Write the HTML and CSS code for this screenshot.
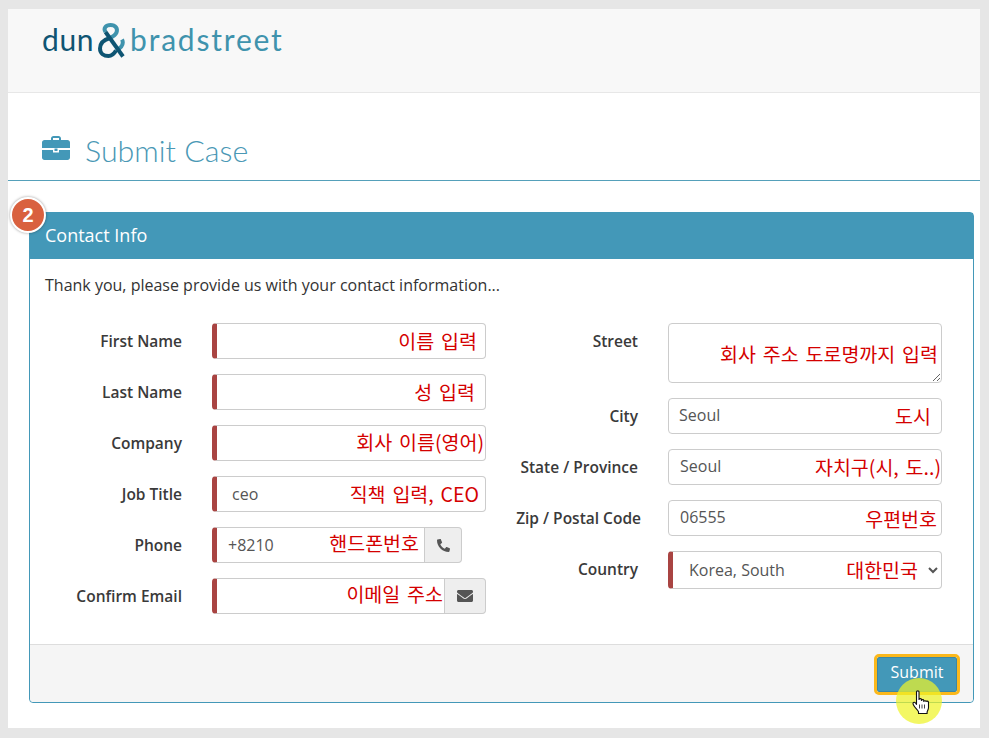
FILE: index.html
```html
<!DOCTYPE html>
<html lang="en">
<head>
    <meta charset="UTF-8">
    <meta name="viewport" content="width=device-width, initial-scale=1.0">
    <title>Submit Case</title>
    <link rel="stylesheet" href="styles.css">
</head>
<body>

    <div class="page">
        <!-- Logo -->
        <header class="top">
            <div class="logo">
                <span class="logo-dun">dun</span>
                <svg class="logo-amp" viewBox="0 0 27 35" width="27" height="35" fill="none" stroke-width="4">
                    <path d="M7.500 9 C5 5 8 2 12.500 2 C17.500 2 20 5.500 18.500 9.500 C17.500 12 15 13.500 12 15" stroke="#3f93ad"/>
                    <path d="M18 27.500 C21 26 24.800 23 24.800 19.500 C24.800 18.500 24.500 17.500 24 16.500" stroke="#3f93ad"/>
                    <path d="M7.500 9 L25 33.500" stroke="#0f5573"/>
                    <path d="M12 15 C5 17 2 21 2 25.500 C2 30.500 6 33 10.500 33 C14 33 16 31 18 27.500" stroke="#0f5573"/>
                </svg>
                <span class="logo-brad">bradstreet</span>
            </div>
        </header>

        <!-- Titulo -->
        <div class="title">
            <svg class="title-icon" viewBox="0 0 28 24" width="28" height="24">
                <path d="M9 4V2.500C9 1.100 10.100 0 11.500 0h5C17.900 0 19 1.100 19 2.500V4h6.500C26.900 4 28 5.100 28 6.500V12H0V6.500C0 5.100 1.100 4 2.500 4zM11 2v2h6V2z" fill="#4398b8"/>
                <path d="M0 14h11v2.500h6V14h11v7.500C28 22.900 26.900 24 25.500 24h-23C1.100 24 0 22.900 0 21.500z" fill="#4398b8"/>
                <rect x="12.500" y="12.500" width="3" height="2.500" fill="#4398b8"/>
            </svg>
            <h1>Submit Case</h1>
        </div>

        <!-- Painel de contato -->
        <section class="panel">
            <span class="step">2</span>
            <h2 class="panel-head">Contact Info</h2>
            <div class="panel-body">
                <p class="intro">Thank you, please provide us with your contact information...</p>

                <div class="form">
                    <div class="col col-left">
                        <div class="row">
                            <label>First Name</label>
                            <div class="field">
                                <input class="req" type="text">
                                <span class="note note-first">이름 입력</span>
                            </div>
                        </div>
                        <div class="row">
                            <label>Last Name</label>
                            <div class="field">
                                <input class="req" type="text">
                                <span class="note note-last">성 입력</span>
                            </div>
                        </div>
                        <div class="row">
                            <label>Company</label>
                            <div class="field">
                                <input class="req" type="text">
                                <span class="note note-company">회사 이름(영어)</span>
                            </div>
                        </div>
                        <div class="row">
                            <label>Job Title</label>
                            <div class="field">
                                <input class="req job" type="text" value="ceo">
                                <span class="note note-job">직책 입력, CEO</span>
                            </div>
                        </div>
                        <div class="row">
                            <label>Phone</label>
                            <div class="field group group-phone">
                                <input class="req phone" type="text" value="+8210">
                                <span class="addon">
                                    <svg viewBox="0 0 512 512" width="13" height="13"><path transform="matrix(-1 0 0 1 512 0)" d="M493.400 24.600l-104-24c-11.300-2.600-22.900 3.300-27.500 13.900l-48 112c-4.200 9.800-1.400 21.300 6.900 28l60.600 49.600c-36 76.700-98.900 140.500-177.200 177.200l-49.600-60.600c-6.800-8.300-18.200-11.100-28-6.900l-112 48C3.900 366.500-2 378.100.6 389.400l24 104C27.100 504.200 36.700 512 48 512c256.100 0 464-207.500 464-464 0-11.200-7.700-20.900-18.600-23.400z" fill="#555"/></svg>
                                </span>
                                <span class="note note-phone">핸드폰번호</span>
                            </div>
                        </div>
                        <div class="row">
                            <label>Confirm Email</label>
                            <div class="field group">
                                <input class="req" type="text">
                                <span class="addon addon-mail">
                                    <svg viewBox="0 0 512 512" width="16" height="16"><path d="M502.300 190.800c3.900-3.100 9.700-.2 9.700 4.700V400c0 26.500-21.500 48-48 48H48c-26.500 0-48-21.500-48-48V195.600c0-5 5.700-7.800 9.700-4.700 22.400 17.400 52.100 39.500 154.100 113.600 21.100 15.400 56.700 47.800 92.200 47.600 35.700.3 72-32.800 92.300-47.600 102-74.100 131.600-96.300 154-113.700zM256 320c23.200.4 56.600-29.200 73.400-41.400 132.700-96.300 142.800-104.700 173.400-128.700 5.800-4.500 9.200-11.500 9.200-18.900v-19c0-26.500-21.500-48-48-48H48C21.500 64 0 85.500 0 112v19c0 7.400 3.400 14.300 9.200 18.900 30.600 23.900 40.700 32.400 173.400 128.700 16.800 12.200 50.200 41.800 73.400 41.400z" fill="#555"/></svg>
                                </span>
                                <span class="note note-email">이메일 주소</span>
                            </div>
                        </div>
                    </div>

                    <div class="col col-right">
                        <div class="row">
                            <label>Street</label>
                            <div class="field">
                                <textarea></textarea>
                                <span class="note note-street">회사 주소 도로명까지 입력</span>
                            </div>
                        </div>
                        <div class="row">
                            <label>City</label>
                            <div class="field">
                                <input class="plain" type="text" value="Seoul">
                                <span class="note note-city">도시</span>
                            </div>
                        </div>
                        <div class="row">
                            <label>State / Province</label>
                            <div class="field">
                                <input class="plain shifted" type="text" value="Seoul">
                                <span class="note note-state">자치구(시, 도..)</span>
                            </div>
                        </div>
                        <div class="row">
                            <label class="label-wide">Zip / Postal Code</label>
                            <div class="field">
                                <input class="plain shifted" type="text" value="06555">
                                <span class="note note-zip">우편번호</span>
                            </div>
                        </div>
                        <div class="row row-select">
                            <label>Country</label>
                            <div class="field">
                                <select>
                                    <option>Korea, South</option>
                                </select>
                                <span class="note note-country">대한민국</span>
                            </div>
                        </div>
                    </div>
                </div>
            </div>

            <div class="panel-foot">
                <button type="button">Submit</button>
                <span class="click-mark"></span>
                <svg class="hand" viewBox="0 0 18 25" width="18" height="25">
                    <path d="M4.500 1.800C4.500.5 7 .5 7 1.800V9.500c0-1.200 2.400-1.200 2.400 0v1c0-1.200 2.400-1.200 2.400 0v1c0-1.100 2.300-1.100 2.300 0 0-.6 2.400-.6 2.400.8v5.200c0 1.800-1 3-1.400 4.500v1.500H6.500v-1.800C5.500 19.500 1 16 1 13.500c0-1.500 1.800-1.500 2.500-.5l1 1.300z" fill="#fff" stroke="#111" stroke-width="1.100" stroke-linejoin="round"/>
                    <path d="M7.500 14.500v4M10 14.500v4M12.500 14.500v4" stroke="#111" stroke-width=".8" fill="none"/>
                </svg>
            </div>
        </section>
    </div>

</body>
</html>
```

FILE: styles.css
```css
/* Moldura e pagina */
html, body {
    height: 100%;
}

body {
    font-family: 'Open Sans', 'Noto Sans', sans-serif;
    background-color: #e6e6e6;
    margin: 0;
    padding: 9px 9px 10px 8px;
    box-sizing: border-box;
    color: #333;
    overflow: hidden;
}

.page {
    background-color: #fff;
    height: 100%;
}

/* Cabecalho com logo */
.top {
    height: 84px;
    box-sizing: border-box;
    background-color: #f8f8f8;
    border-bottom: 1px solid #e7e7e7;
    padding: 14px 0 0 34px;
}

.logo {
    display: flex;
    align-items: flex-start;
    font-family: 'Lato', sans-serif;
    font-weight: 400;
    font-size: 30px;
    line-height: 32px;
}

.logo-dun {
    color: #0f5573;
    letter-spacing: 0.6px;
}

.logo-amp {
    margin: 0 5px 0 4px;
}

.logo-brad {
    color: #3f93ad;
    letter-spacing: 1.800px;
}

/* Titulo */
.title {
    display: flex;
    align-items: center;
    height: 88px;
    box-sizing: border-box;
    border-bottom: 1px solid #55a0ba;
    padding: 26px 0 0 34px;
}

.title-icon {
    margin-bottom: 4px;
}

h1 {
    font-family: 'Lato', sans-serif;
    font-weight: 300;
    font-size: 30.400px;
    color: #4a98b5;
    margin: 0 0 0 15px;
}

/* Painel */
.panel {
    position: relative;
    margin: 31px 6px 0 21px;
    border: 1px solid #4398b8;
    border-radius: 4px;
    height: 491px;
    box-sizing: border-box;
    display: flex;
    flex-direction: column;
}

.panel-head {
    background-color: #4398b8;
    color: #fff;
    font-size: 18px;
    font-weight: 400;
    line-height: 44px;
    height: 46px;
    margin: 0;
    padding: 0 15px;
}

.panel-body {
    flex: 1;
    padding: 0 0 0 15px;
}

.intro {
    font-size: 16px;
    line-height: 22px;
    margin: 15px 0 27px;
    color: #333;
}

.step {
    position: absolute;
    left: -20px;
    top: -16px;
    width: 32px;
    height: 32px;
    border-radius: 50%;
    border: 2px solid #fff;
    box-shadow: 0 0 3px rgba(0, 0, 0, 0.4);
    background-color: #d9613f;
    color: #fff;
    font-family: 'Liberation Sans', sans-serif;
    font-weight: bold;
    font-size: 20px;
    line-height: 32px;
    text-align: center;
}

/* Formulario */
.form {
    display: flex;
}

.col {
    display: flex;
    flex-direction: column;
    gap: 15px;
}

.col-left {
    width: 455px;
}

.row {
    display: flex;
    align-items: flex-start;
}

.row label {
    font-size: 15.500px;
    font-weight: 600;
    line-height: 36px;
    text-align: right;
    color: #3a3a3a;
    white-space: nowrap;
    margin-right: 30px;
}

.col-left label {
    width: 137px;
}

.col-right label {
    width: 138px;
}

.col-right .label-wide {
    width: 141px;
    margin-right: 27px;
    flex-shrink: 0;
    text-indent: -10px;
}

.field {
    position: relative;
    width: 274px;
}

input, textarea, select {
    display: block;
    width: 100%;
    height: 36px;
    box-sizing: border-box;
    font-family: 'Open Sans', sans-serif;
    font-size: 16px;
    color: #555;
    background-color: #fff;
    border: 1px solid #ccc;
    border-radius: 4px;
    padding: 0 11px;
}

textarea {
    height: 60px;
}

select {
    height: 38px;
    padding-left: 12px;
    border-left: 5px solid #a94442;
}

.req {
    border-left: 5px solid #a94442;
}

.job {
    padding-left: 15px;
}

.phone {
    padding-left: 11px;
}

.plain {
    padding: 0 10px 3px;
}

.shifted {
    padding-left: 11px;
}

/* Campos com icone */
.group {
    display: flex;
}

.group input {
    border-radius: 4px 0 0 4px;
    flex: 1;
    min-width: 0;
}

.group-phone {
    width: 250px;
}

.addon {
    display: flex;
    align-items: center;
    justify-content: center;
    width: 36px;
    flex-shrink: 0;
    background-color: #eee;
    border: 1px solid #ccc;
    border-left: none;
    border-radius: 0 4px 4px 0;
}

.addon-mail {
    width: 40px;
}

/* Anotacoes em vermelho */
.note {
    position: absolute;
    top: 0;
    line-height: 36px;
    font-family: 'Noto Sans CJK KR', 'Open Sans', sans-serif;
    font-size: 19.500px;
    word-spacing: 2.500px;
    color: #d40000;
    white-space: nowrap;
    pointer-events: none;
}

.note-first { right: 9px; }
.note-last { right: 11px; }
.note-company { right: 2px; top: -1px; }
.note-job { right: 7px; }
.note-phone { right: 43px; top: -2px; }
.note-email { right: 43px; top: -2px; }
.note-street { right: 4px; top: 13px; }
.note-city { right: 11px; }
.note-state { right: 1px; }
.note-zip { right: 5px; top: 1px; }
.note-country { right: 24px; top: 1px; }

/* Rodape do painel */
.panel-foot {
    position: relative;
    display: flex;
    justify-content: flex-end;
    align-items: flex-start;
    height: 58px;
    box-sizing: border-box;
    background-color: #f5f5f5;
    border-top: 1px solid #ddd;
    padding: 12px 16px 0 0;
    border-radius: 0 0 4px 4px;
}

button {
    background-color: #4398b8;
    color: #fff;
    font-family: 'Open Sans', sans-serif;
    font-size: 16px;
    border: 1px solid #3b87a3;
    border-radius: 2px;
    width: 80px;
    height: 35px;
    padding: 0 0 5px;
    outline: 3px solid #fbb81b;
}

.click-mark {
    position: absolute;
    right: 31px;
    top: 33px;
    width: 46px;
    height: 46px;
    border-radius: 50%;
    background-color: rgba(238, 244, 40, 0.72);
}

.hand {
    position: absolute;
    right: 43px;
    top: 45px;
}
```
